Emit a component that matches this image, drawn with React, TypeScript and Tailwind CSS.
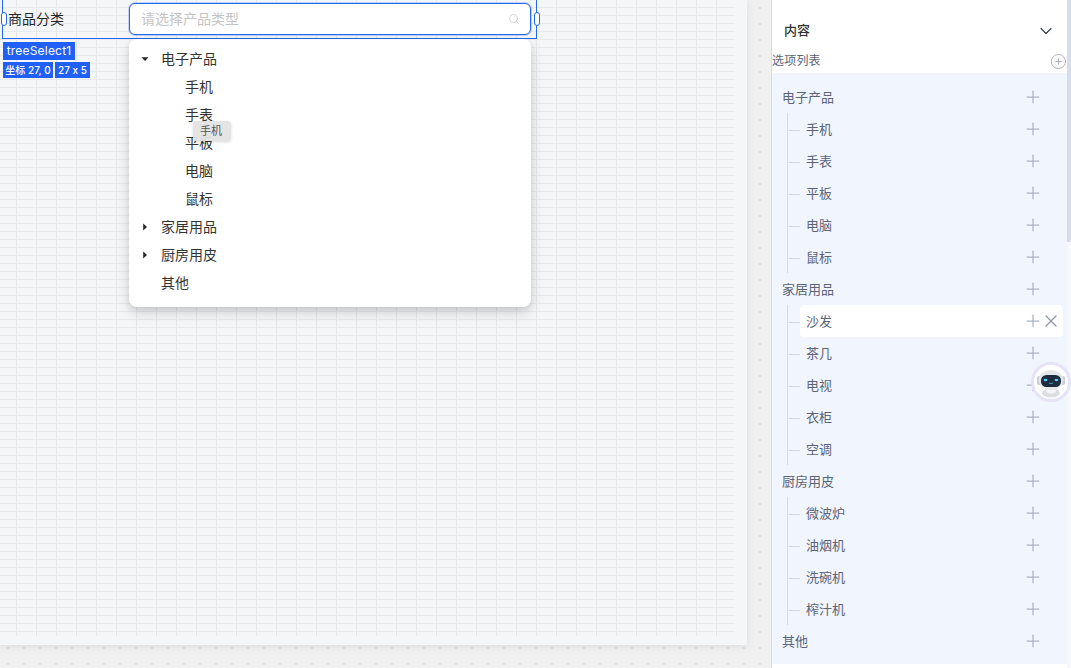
import { ChevronDown, Plus, Search, X, CirclePlus } from "lucide-react";

const font = "font-['Inter','Noto_Sans_CJK_SC',sans-serif]";

const treeData: { name: string; children?: string[] }[] = [
  { name: "电子产品", children: ["手机", "手表", "平板", "电脑", "鼠标"] },
  { name: "家居用品", children: ["沙发", "茶几", "电视", "衣柜", "空调"] },
  { name: "厨房用皮", children: ["微波炉", "油烟机", "洗碗机", "榨汁机"] },
  { name: "其他" },
];

function Caret({ open }: { open?: boolean }) {
  return (
    <svg width="8" height="8" viewBox="0 0 8 8" className="shrink-0 text-[#262626]">
      {open ? <path d="M0.5 2.2h7L4 6z" fill="currentColor" /> : <path d="M2.2 0.5v7L6 4z" fill="currentColor" />}
    </svg>
  );
}

function DropRow({ label, caret, open, child }: { label: string; caret?: boolean; open?: boolean; child?: boolean }) {
  return (
    <div className={`flex h-7 items-center text-sm text-[#333] ${child ? "pl-[56px]" : "pl-3"}`}>
      {!child && <div className="flex w-5 items-center">{caret && <Caret open={open} />}</div>}
      <span>{label}</span>
    </div>
  );
}

function TreeRow({ label, child, active }: { label: string; child?: boolean; active?: boolean }) {
  return (
    <div className={`flex h-8 items-center ${child ? "relative pl-[34px]" : "pl-[10px]"} ${active ? "pr-0" : "pr-6"}`}>
      {child && (
        <>
          <span className="absolute left-[15px] top-0 h-8 w-px bg-[#d8d9de]" />
          <span className="absolute left-[17px] top-[17px] h-px w-[11px] bg-[#d8d9de]" />
        </>
      )}
      {active && <span className="absolute bottom-0 left-[28px] right-1 top-0 rounded-sm bg-white" />}
      <span className="relative flex-1 pt-px text-[13px] text-[#5b6478]">{label}</span>
      <Plus size={20} strokeWidth={1.5} className="relative text-[#aab2c2]" />
      {active && <X size={20} strokeWidth={1.5} className="relative -ml-[2px] mr-[6px] text-[#8e96a8]" />}
    </div>
  );
}

function Robot() {
  return (
    <div className="absolute left-[1031px] top-[362px] flex h-10 w-10 items-center justify-center rounded-full border-[3px] border-[#e6e3f8] bg-white">
      <svg width="30" height="32" viewBox="0 0 30 32">
        <ellipse cx="15" cy="27" rx="9" ry="4.5" fill="#dcdee3" />
        <ellipse cx="15" cy="25" rx="5" ry="2.5" fill="#f3f4f6" />
        <rect x="1" y="10" width="4" height="9" rx="2" fill="#c9ccd3" />
        <rect x="25" y="10" width="4" height="9" rx="2" fill="#c9ccd3" />
        <ellipse cx="15" cy="14" rx="12.5" ry="10" fill="#e4e6ea" />
        <rect x="5" y="9" width="20" height="12" rx="5.5" fill="#1d2c3f" />
        <ellipse cx="9.5" cy="14" rx="1.9" ry="1.3" fill="#4fd0ec" />
        <ellipse cx="20.5" cy="14" rx="1.9" ry="1.3" fill="#4fd0ec" />
        <path d="M13 17q2 1.2 4 0" stroke="#4fd0ec" strokeWidth="0.7" fill="none" />
      </svg>
    </div>
  );
}

export default function App() {
  return (
    <div className={`relative flex h-[668px] w-[1071px] overflow-hidden bg-white ${font}`}>
      {/* canvas */}
      <div className="relative h-full w-[771px] shrink-0 bg-[#f0f0f0] bg-[radial-gradient(circle,#dcdcdc_1px,transparent_1.1px)] bg-[length:16px_16px]">
        <div className="h-[645px] w-[747px] bg-[#f5f6f8] pb-[9px] pr-[12px] shadow-[0_2px_8px_rgba(0,0,0,0.08)]">
          <div className="h-full w-full bg-[linear-gradient(#e9eaed_1px,transparent_1px),linear-gradient(90deg,#e6e7ea_1px,transparent_1px)] bg-[length:20px_8px] bg-[position:16px_7px]" />
        </div>

        {/* selected component */}
        <div className="absolute left-[2px] top-[-2px] h-[41px] w-[535px] border border-[#2468f2]" />
        <div className="absolute left-[1px] top-[12px] h-[14px] w-[6px] rounded-[3px] border-[1.5px] border-[#2468f2] bg-white" />
        <div className="absolute left-[534px] top-[12px] h-[14px] w-[6px] rounded-[3px] border-[1.5px] border-[#2468f2] bg-white" />
        <div className="absolute left-[8px] top-[9px] text-sm leading-[20px] text-[#262626]">商品分类</div>

        <div className="absolute left-[129px] top-[3px] flex h-[32px] w-[402px] items-center justify-between rounded-md border border-[#2468f2] bg-white pl-[11px] pr-[10px] shadow-[0_0_0_1px_rgba(36,104,242,0.25)]">
          <span className="text-sm text-[#c4c4c4]">请选择产品类型</span>
          <Search size={12} strokeWidth={1.5} className="text-[#c4c4c4]" />
        </div>

        <div className="absolute left-[3px] top-[42px] flex h-[18px] w-[72px] items-center justify-center bg-[#2060f6] text-xs tracking-[0.2px] text-white">treeSelect1</div>
        <div className="absolute left-[3px] top-[62px] flex gap-px text-[10px] font-medium leading-none text-white [font-feature-settings:'calt'_0]">
          <span className="flex h-4 w-[50px] items-center justify-center bg-[#2060f6]">坐标 27, 0</span>
          <span className="ml-px flex h-4 w-[35px] items-center justify-center bg-[#2060f6]">27 x 5</span>
        </div>

        {/* dropdown */}
        <div className="absolute left-[129px] top-[39px] h-[268px] w-[402px] rounded-lg bg-white py-1 shadow-[0_6px_16px_rgba(0,0,0,0.12),0_3px_6px_rgba(0,0,0,0.1)]">
          <div className="h-[2px]" />
          <DropRow label="电子产品" caret open />
          {treeData[0].children!.map((c) => (
            <DropRow key={c} label={c} child />
          ))}
          <DropRow label="家居用品" caret />
          <DropRow label="厨房用皮" caret />
          <DropRow label="其他" />
        </div>

        <div className="absolute left-[193px] top-[121px] flex h-5 w-[38px] items-center justify-center rounded-[3px] bg-[#e3e3e3]/95 pr-[2px] text-[11px] text-[#555] shadow-[0_1px_3px_rgba(0,0,0,0.15)]">手机</div>
      </div>

      {/* right panel */}
      <div className="flex h-full w-[300px] shrink-0 border-l border-[#d3d9e6] bg-[#f6f8fe] pr-1">
        <div className="flex h-full min-w-0 flex-1 flex-col bg-white">
          <div className="flex h-[55px] items-center justify-between pl-3 pr-[11px] pt-[7px]">
            <span className="text-[13px] font-medium text-[#333]">内容</span>
            <ChevronDown size={20} strokeWidth={1.3} className="text-[#333b49]" />
          </div>
          <div className="flex h-3 items-center justify-between">
            <span className="text-xs tracking-[0.2px] text-[#5c6473]">选项列表</span>
            <CirclePlus size={17} strokeWidth={1} className="text-[#8c93a3]" />
          </div>
          <div className="mt-[6px] h-[591px] bg-[#f1f5fe] pt-2">
            {treeData.map((g) => (
              <div key={g.name}>
                <TreeRow label={g.name} />
                {g.children?.map((c) => (
                  <TreeRow key={c} label={c} child active={c === "沙发"} />
                ))}
              </div>
            ))}
          </div>
        </div>
        <div className="absolute right-0 top-0 h-[242px] w-1 bg-[#d6dcea]" />
      </div>

      <Robot />
    </div>
  );
}
